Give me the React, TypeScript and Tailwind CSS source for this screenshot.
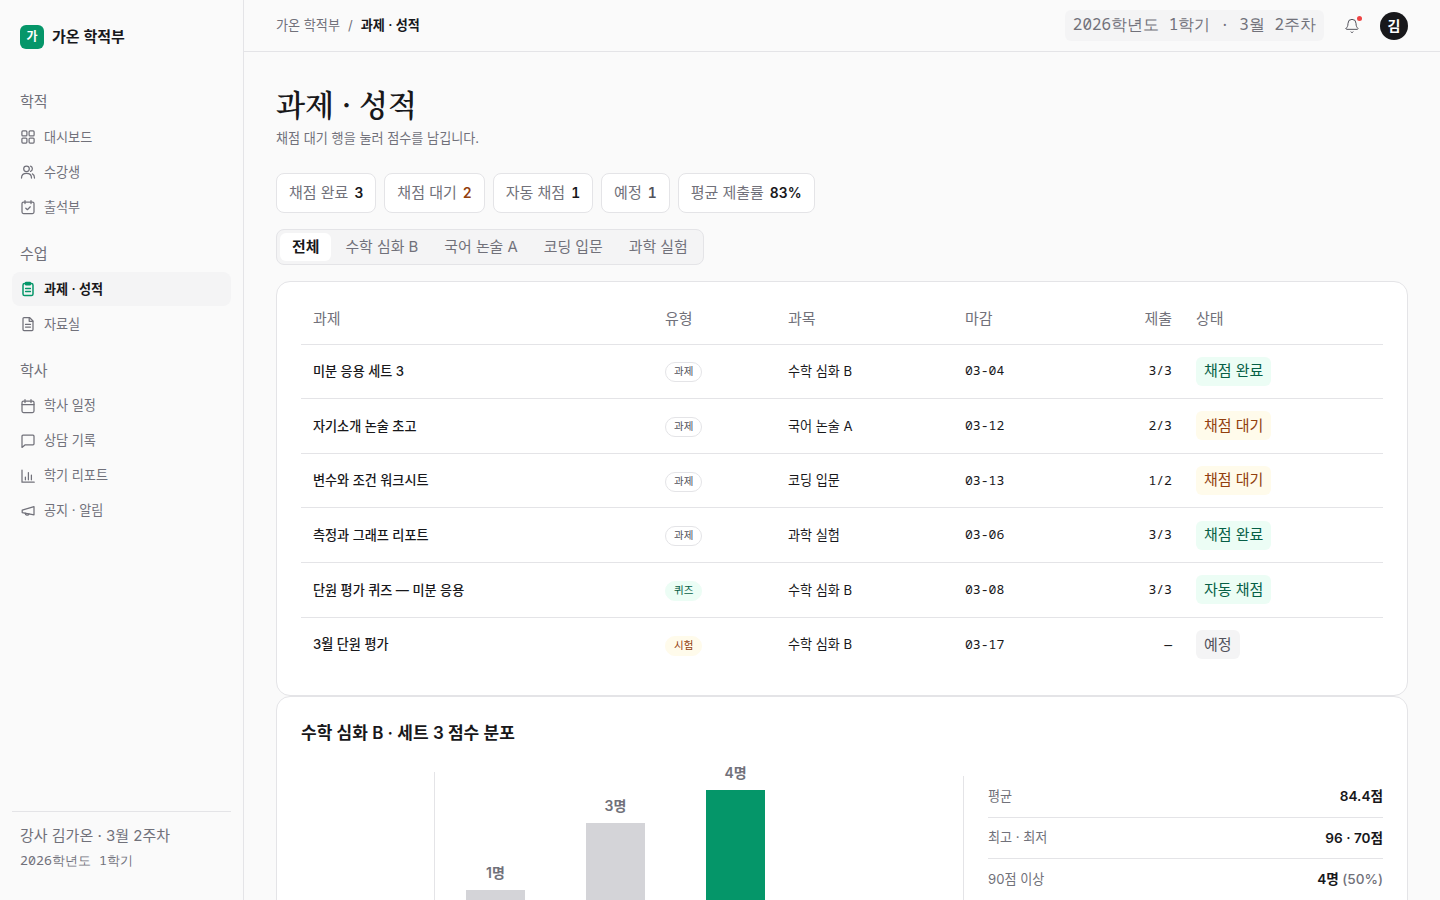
import React from 'react';
import { Bell } from 'lucide-react';

const iconProps = {
  viewBox: '0 0 16 16',
  fill: 'none',
  stroke: 'currentColor',
  strokeWidth: 1.25,
  strokeLinecap: 'round' as const,
  strokeLinejoin: 'round' as const,
  className: 'h-4 w-4 shrink-0',
};

const GridIcon = () => (
  <svg {...iconProps}>
    <rect x="1.9" y="1.9" width="5" height="5" rx="1" />
    <rect x="9.1" y="1.9" width="5" height="5" rx="1" />
    <rect x="1.9" y="9.1" width="5" height="5" rx="1" />
    <rect x="9.1" y="9.1" width="5" height="5" rx="1" />
  </svg>
);

const UsersIcon = () => (
  <svg {...iconProps}>
    <circle cx="6.5" cy="4.8" r="2.8" />
    <path d="M1.5 14c0-3 2-4.6 5-4.6s5 1.6 5 4.6" />
    <path d="M10.6 2.2a2.8 2.8 0 0 1 0 5.2" />
    <path d="M12.4 9.9c1.3.6 2.1 2 2.1 4.1" />
  </svg>
);

const CheckCalendarIcon = () => (
  <svg {...iconProps}>
    <rect x="2" y="3" width="12" height="11.5" rx="1.5" />
    <path d="M5 1.5v3M11 1.5v3" />
    <path d="M5.8 9.2l1.6 1.5 2.9-2.9" />
  </svg>
);

const ClipboardIcon = () => (
  <svg {...iconProps} strokeWidth={1.5}>
    <rect x="3" y="2.6" width="10" height="12" rx="1.6" />
    <rect x="5.6" y="1.4" width="4.8" height="2.4" rx="0.6" />
    <path d="M5.6 7.4h4.8M5.6 10.4h4.8" />
  </svg>
);

const FileIcon = () => (
  <svg {...iconProps}>
    <path d="M4 1.5h5.5L13 5v8.5a1 1 0 0 1-1 1H4a1 1 0 0 1-1-1v-11a1 1 0 0 1 1-1z" />
    <path d="M9.2 1.7v3.6h3.6" />
    <path d="M5.5 8.4h5M5.5 11h5" />
  </svg>
);

const CalendarIcon = () => (
  <svg {...iconProps}>
    <rect x="2" y="3" width="12" height="11.5" rx="1.5" />
    <path d="M2 6.5h12" />
    <path d="M5 1.5v3M11 1.5v3" />
  </svg>
);

const ChatIcon = () => (
  <svg {...iconProps}>
    <path d="M2 3.2a1 1 0 0 1 1-1h10a1 1 0 0 1 1 1v7.6a1 1 0 0 1-1 1H5.2L2 14.4z" />
  </svg>
);

const ChartIcon = () => (
  <svg {...iconProps}>
    <path d="M2 2v12.2h12.2" />
    <path d="M5.4 11.8V9M8.4 11.8V4.6M11.4 11.8V7" />
  </svg>
);

const HornIcon = () => (
  <svg {...iconProps}>
    <path d="M14 3.6v8.2L2.2 9.6V7.2z" />
    <path d="M5.2 10.2a2 2 0 0 0 3.8.8" />
  </svg>
);

const navGroups = [
  {
    title: '학적',
    items: [
      { label: '대시보드', icon: GridIcon },
      { label: '수강생', icon: UsersIcon },
      { label: '출석부', icon: CheckCalendarIcon },
    ],
  },
  {
    title: '수업',
    items: [
      { label: '과제 · 성적', icon: ClipboardIcon, active: true },
      { label: '자료실', icon: FileIcon },
    ],
  },
  {
    title: '학사',
    items: [
      { label: '학사 일정', icon: CalendarIcon },
      { label: '상담 기록', icon: ChatIcon },
      { label: '학기 리포트', icon: ChartIcon },
      { label: '공지 · 알림', icon: HornIcon },
    ],
  },
];

const summary = [
  { label: '채점 완료', value: '3', tone: 'text-[#18181b]' },
  { label: '채점 대기', value: '2', tone: 'text-[#92400e]' },
  { label: '자동 채점', value: '1', tone: 'text-[#18181b]' },
  { label: '예정', value: '1', tone: 'text-[#52525b]' },
  { label: '평균 제출률', value: '83%', tone: 'text-[#18181b]' },
];

const tabs = ['전체', '수학 심화 B', '국어 논술 A', '코딩 입문', '과학 실험'];

const typeStyles: Record<string, string> = {
  과제: 'border border-[#e4e4e7] text-[#52525b]',
  퀴즈: 'border border-[#ecfdf5] bg-[#ecfdf5] text-[#065f46]',
  시험: 'border border-[#fffbeb] bg-[#fffbeb] text-[#92400e]',
};

const statusStyles: Record<string, string> = {
  '채점 완료': 'bg-[#ecfdf5] text-[#065f46]',
  '채점 대기': 'bg-[#fffbeb] text-[#92400e]',
  '자동 채점': 'bg-[#ecfdf5] text-[#065f46]',
  예정: 'bg-[#f4f4f5] text-[#52525b]',
};

const rows = [
  { name: '미분 응용 세트 3', type: '과제', subject: '수학 심화 B', due: '03-04', submitted: '3/3', status: '채점 완료' },
  { name: '자기소개 논술 초고', type: '과제', subject: '국어 논술 A', due: '03-12', submitted: '2/3', status: '채점 대기' },
  { name: '변수와 조건 워크시트', type: '과제', subject: '코딩 입문', due: '03-13', submitted: '1/2', status: '채점 대기' },
  { name: '측정과 그래프 리포트', type: '과제', subject: '과학 실험', due: '03-06', submitted: '3/3', status: '채점 완료' },
  { name: '단원 평가 퀴즈 — 미분 응용', type: '퀴즈', subject: '수학 심화 B', due: '03-08', submitted: '3/3', status: '자동 채점' },
  { name: '3월 단원 평가', type: '시험', subject: '수학 심화 B', due: '03-17', submitted: '—', status: '예정' },
];

const bars = [
  { label: '1명', height: 'h-[33px]', color: 'bg-[#d4d4d8]' },
  { label: '3명', height: 'h-[100px]', color: 'bg-[#d4d4d8]' },
  { label: '4명', height: 'h-[133px]', color: 'bg-[#059669]' },
];

const Sidebar = () => (
  <aside className="flex h-full w-[244px] shrink-0 flex-col border-r border-[#e4e4e7] bg-[#fafafa] px-3">
    <div className="flex h-[74px] items-center gap-2 px-2">
      <div className="flex h-6 w-6 items-center justify-center rounded-md bg-[#059669] text-xs font-bold text-white">가</div>
      <span className="text-[15px] font-semibold text-[#18181b]">가온 학적부</span>
    </div>
    <nav className="flex-1 pt-[11px]">
      {navGroups.map((group) => (
        <div key={group.title} className="mb-3 first:mb-[12.6px]">
          <div className="mb-px flex h-[34.4px] items-center px-2 pt-px text-[15px] text-[#71717a]">{group.title}</div>
          <div className="flex flex-col gap-px">
            {group.items.map((item) => {
              const Icon = item.icon;
              return (
                <a
                  key={item.label}
                  className={`flex h-[34px] items-center gap-2 rounded-lg px-2 text-[13.12px] ${
                    item.active ? 'bg-[#f4f4f5] font-semibold text-[#18181b]' : 'text-[#71717a]'
                  }`}
                >
                  <span className={item.active ? 'text-[#059669]' : 'text-[#71717a]'}>
                    <Icon />
                  </span>
                  {item.label}
                </a>
              );
            })}
          </div>
        </div>
      ))}
    </nav>
    <div className="h-[89px] border-t border-[#e4e4e7] px-2 pt-[13px] text-[#71717a]">
      <div className="text-[15px] leading-[22px]">강사 김가온 · 3월 2주차</div>
      <div className="mt-[3px] font-['Noto_Sans_Mono',monospace] text-[13.3px] leading-5">2026학년도 1학기</div>
    </div>
  </aside>
);

const Header = () => (
  <header className="flex h-[52px] shrink-0 items-center justify-between border-b border-[#e4e4e7] bg-[#fafafa] px-8">
    <div className="flex items-center gap-2 text-[13.12px] text-[#71717a]">
      <span>가온 학적부</span>
      <span>/</span>
      <span className="font-semibold text-[#18181b]">과제 · 성적</span>
    </div>
    <div className="flex items-center gap-[14px]">
      <div className="flex h-[31px] items-center rounded-md bg-[#f4f4f5] px-2 pb-[3px] font-['Noto_Sans_Mono',monospace] text-base text-[#71717a]">
        2026학년도 1학기 · 3월 2주차
      </div>
      <div className="relative flex h-7 w-7 items-center justify-center">
        <Bell className="h-4 w-4 text-[#52525b]" strokeWidth={1.5} />
        <span className="absolute right-[4px] top-[4px] h-[5px] w-[5px] rounded-full bg-[#ef4444]" />
      </div>
      <div className="flex h-7 w-7 items-center justify-center rounded-full bg-[#18181b] text-sm font-bold text-white">김</div>
    </div>
  </header>
);

const AssignmentTable = () => (
  <div className="rounded-[14px] border border-[#e4e4e7] bg-white px-6 pb-[23px] pt-[14px]">
    <table className="w-full table-fixed border-collapse text-[13.12px]">
      <colgroup>
        <col className="w-[352px]" />
        <col className="w-[123px]" />
        <col className="w-[177px]" />
        <col className="w-[171px]" />
        <col className="w-[60px]" />
        <col />
      </colgroup>
      <thead>
        <tr className="h-[48px] border-b border-[#e4e4e7] text-left text-[15px] text-[#71717a]">
          <th className="px-3 pb-[2px] font-normal">과제</th>
          <th className="px-3 pb-[2px] font-normal">유형</th>
          <th className="px-3 pb-[2px] font-normal">과목</th>
          <th className="px-3 pb-[2px] font-normal">마감</th>
          <th className="px-3 pb-[2px] text-right font-normal">제출</th>
          <th className="px-3 pb-[2px] font-normal">상태</th>
        </tr>
      </thead>
      <tbody className="text-[#18181b]">
        {rows.map((row, i) => (
          <tr key={row.name} className={`h-[54.65px] ${i < rows.length - 1 ? 'border-b border-[#e4e4e7]' : ''}`}>
            <td className="px-3 pt-px font-medium">{row.name}</td>
            <td className="px-3 pt-[1px]">
              <span className={`inline-flex h-[20px] items-center rounded-full px-2 text-[10.5px] ${typeStyles[row.type]}`}>{row.type}</span>
            </td>
            <td className="px-3 pt-px">{row.subject}</td>
            <td className="px-3 font-['Noto_Sans_Mono',monospace] text-[13.12px]">{row.due}</td>
            <td className="px-3 text-right font-['Noto_Sans_Mono',monospace] text-[13.12px]">{row.submitted}</td>
            <td className="px-3">
              <span className={`inline-flex h-[29px] items-center rounded-md px-2 text-[15px] ${statusStyles[row.status]}`}>{row.status}</span>
            </td>
          </tr>
        ))}
      </tbody>
    </table>
  </div>
);

const ScoreCard = () => (
  <div className="rounded-[14px] border border-[#e4e4e7] bg-white px-6 pt-6 pb-6">
    <h2 className="text-[17px] font-semibold leading-[24px] text-[#18181b]">수학 심화 B · 세트 3 점수 분포</h2>
    <div className="mt-[27px] grid grid-cols-[638px_420px] gap-6">
      <div className="ml-[133px] flex h-[151px] items-end gap-[61px] border-l border-[#e4e4e7] pl-[31px]">
        {bars.map((bar) => (
          <div key={bar.label} className="flex w-[59px] flex-col items-center justify-end gap-[7px]">
            <span className="text-sm font-semibold text-[#71717a]">{bar.label}</span>
            <div className={`w-full ${bar.height} ${bar.color}`} />
          </div>
        ))}
      </div>
      <div className="mt-1 border-l border-[#e4e4e7] pl-6">
        <div className="flex h-[42px] items-center justify-between border-b border-[#e4e4e7] text-[13.12px] text-[#71717a]">
          <span>평균</span>
          <span className="text-[13.6px] font-semibold text-[#18181b]">84.4점</span>
        </div>
        <div className="flex h-[41px] items-center justify-between border-b border-[#e4e4e7] text-[13.12px] text-[#71717a]">
          <span>최고 · 최저</span>
          <span className="text-[13.6px] font-semibold text-[#18181b]">96 · 70점</span>
        </div>
        <div className="flex h-[41px] items-center justify-between text-[13.12px] text-[#71717a]">
          <span>90점 이상</span>
          <span className="text-[13.6px] font-semibold text-[#18181b]">
            4명 <span className="font-medium text-[#71717a]">(50%)</span>
          </span>
        </div>
      </div>
    </div>
  </div>
);

const App: React.FC = () => {
  return (
    <div className="flex h-screen w-full overflow-hidden bg-[#fafafa] font-[Inter,'Noto_Sans_CJK_KR',sans-serif]">
      <Sidebar />
      <div className="flex min-w-0 flex-1 flex-col">
        <Header />
        <main className="flex-1 overflow-hidden px-8 pt-8">
          <h1 className="font-['Noto_Serif_CJK_KR','Liberation_Serif',serif] text-[30px] font-semibold leading-[38px] text-[#18181b]">과제 · 성적</h1>
          <p className="mt-[6px] text-[13.12px] leading-5 text-[#71717a]">채점 대기 행을 눌러 점수를 남깁니다.</p>

          <div className="mt-[25px] flex gap-2">
            {summary.map((item) => (
              <div key={item.label} className="flex h-10 items-center gap-[6px] rounded-lg border border-[#e4e4e7] bg-white px-3 text-[15px] text-[#71717a]">
                {item.label}
                <span className={`text-[13.8px] font-semibold tabular-nums ${item.tone}`}>{item.value}</span>
              </div>
            ))}
          </div>

          <div className="mt-4 inline-flex h-9 items-center gap-0.5 rounded-lg border border-[#e4e4e7] bg-[#f4f4f5] p-[3px] text-[14.9px] text-[#71717a]">
            {tabs.map((tab, i) => (
              <div key={tab} className={`flex h-7 items-center rounded-md px-3 ${i === 0 ? 'bg-white font-semibold text-[#18181b]' : ''}`}>
                {tab}
              </div>
            ))}
          </div>

          <div className="mt-4">
            <AssignmentTable />
            <ScoreCard />
          </div>
        </main>
      </div>
    </div>
  );
};

export default App;
